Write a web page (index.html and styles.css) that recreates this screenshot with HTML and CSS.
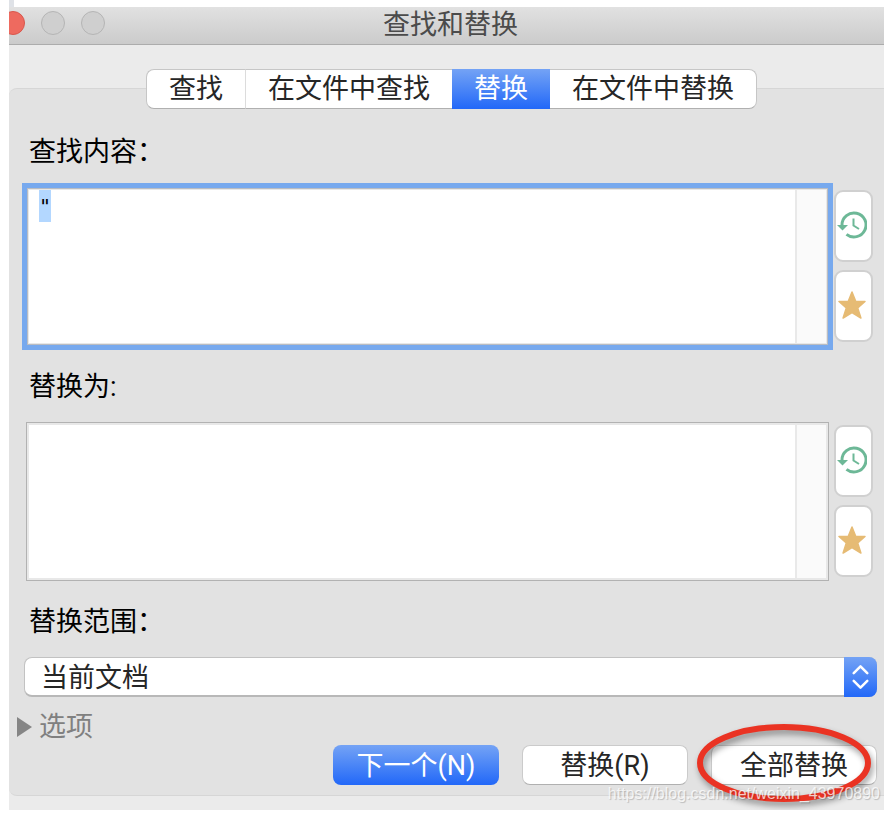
FILE: index.html
```html
<!DOCTYPE html>
<html lang="zh-CN">
<head>
<meta charset="utf-8">
<title>查找和替换</title>
<link rel="stylesheet" href="styles.css">
</head>
<body>
<svg class="symbols" aria-hidden="true">
  <symbol id="history" viewBox="0 0 30 28">
    <path d="M5 14a12 12 0 1 1 4.500 9.300" fill="none" stroke="#6db897" stroke-width="3"/>
    <path d="M0 14h11l-5.500 5.500z" fill="#6db897"/>
    <path d="M16.500 7.500v7l5.500 3.500" fill="none" stroke="#6db897" stroke-width="2"/>
  </symbol>
  <symbol id="star" viewBox="0 0 28 28">
    <path d="M14 1l3.800 9.500H27l-7.300 6.500 3.200 10L14 21.500 5.100 27 8.300 17 1 10.500h9.200z" fill="#e6bb74" stroke="#e6bb74" stroke-width="1.500" stroke-linejoin="round"/>
  </symbol>
</svg>
<main class="window">
  <header class="titlebar">
    <div class="lights"><span class="light close"></span><span class="light"></span><span class="light"></span></div>
    <h1>查找和替换</h1>
  </header>
  <nav class="tabs">
    <button type="button">查找</button>
    <button type="button">在文件中查找</button>
    <button type="button" class="active">替换</button>
    <button type="button">在文件中替换</button>
  </nav>
  <form class="panel">
    <label for="find">查找内容：</label>
    <div class="field">
      <div class="editor"><textarea id="find" autofocus spellcheck="false">"</textarea><span class="gutter"></span></div>
      <div class="tools">
        <button type="button" aria-label="历史"><svg class="icon-history"><use href="#history"/></svg></button>
        <button type="button" aria-label="收藏"><svg class="icon-star"><use href="#star"/></svg></button>
      </div>
    </div>
    <label for="replace">替换为:</label>
    <div class="field">
      <div class="editor"><textarea id="replace" spellcheck="false"></textarea><span class="gutter"></span></div>
      <div class="tools">
        <button type="button" aria-label="历史"><svg class="icon-history"><use href="#history"/></svg></button>
        <button type="button" aria-label="收藏"><svg class="icon-star"><use href="#star"/></svg></button>
      </div>
    </div>
    <label for="scope">替换范围：</label>
    <div class="popup">
      <select id="scope"><option>当前文档</option></select>
      <span class="stepper"><svg viewBox="0 0 34 40"><path d="M10 16l7-7 7 7M10 24l7 7 7-7" fill="none" stroke="#fff" stroke-width="2.600" stroke-linecap="round" stroke-linejoin="round"/></svg></span>
    </div>
    <button type="button" class="options"><svg viewBox="0 0 15 20"><path d="M0 0v20l15-10z" fill="#858585"/></svg>选项</button>
    <div class="actions">
      <button type="button" class="primary">下一个(N)</button>
      <button type="button">替换(R)</button>
      <div class="marked">
        <button type="button">全部替换</button>
        <svg class="ring" viewBox="0 0 190 94"><ellipse cx="90" cy="42" rx="84" ry="36" fill="none" stroke="#ea3323" stroke-width="6"/></svg>
      </div>
    </div>
  </form>
  <span class="watermark">https://blog.csdn.net/weixin_43970890</span>
</main>
<script src="main.js"></script>
</body>
</html>
```
FILE: styles.css
```css
* { box-sizing: border-box; }
body {
  margin: 0;
  padding: 7px 5px 3px 9px;
  background: linear-gradient(#dfe2e7, #dfe2e7) 9px 0 / 5px 7px no-repeat #fff;
  font: 27px/32px Roboto, "Noto Sans CJK SC", sans-serif;
  color: #000;
}
button, select { font: inherit; color: #262626; margin: 0; padding: 0; border: 0; outline: 0; background: none; white-space: nowrap; }
.symbols { display: none; }
.window { position: relative; background: #ebebeb; overflow: hidden; padding-bottom: 14px; }
.titlebar {
  position: relative;
  height: 38px;
  padding-left: 8px;
  border-bottom: 1px solid #acacac;
  background: linear-gradient(#e1e1e1, #cbcbcb);
}
.titlebar h1 { margin: 0; font: inherit; line-height: 36px; text-align: center; color: #4b4b4b; }
.lights { position: absolute; left: -8px; top: 4px; display: flex; gap: 16px; }
.light { width: 24px; height: 24px; border: 1px solid #b5b5b5; border-radius: 50%; background: #cfcfcf; }
.light.close { background: #ee6a5f; border-color: #d9574d; }
.tabs { position: relative; z-index: 1; display: flex; justify-content: center; margin: 24px 0 -21px; padding-left: 10px; }
.tabs button {
  height: 40px;
  padding: 0 22px;
  border: solid #c6c6c6;
  border-width: 1px 0;
  border-bottom-color: #b0b0b0;
  background: #fff;
}
.tabs button:first-child { border-left-width: 1px; border-radius: 8px 0 0 8px; }
.tabs button:last-child { border-right-width: 1px; border-radius: 0 8px 8px 0; }
.tabs button + button:not(.active):not(:last-child) { border-left: 1px solid #dcdcdc; }
.tabs .active { border-color: transparent; }
.tabs .active, .primary, .stepper { background: linear-gradient(#74a3f5, #2268f8) border-box; color: #fff; }
.panel {
  display: flex;
  flex-direction: column;
  padding: 47px 7px 10px 17px;
  border: 1px solid #d6d6d6;
  border-width: 1px 0;
  border-radius: 8px 0 0 8px;
  background: #e2e2e2;
}
.panel label { margin-left: 3px; }
.field { display: flex; gap: 5px; margin: 19px 4px 25px 0; }
.editor {
  display: flex;
  flex: 1;
  height: 159px;
  border: 1px solid #b2b2b2;
  background: #fff;
  box-shadow: inset 0 0 0 2px #e8e8e8;
  padding: 2px;
}
.editor:focus-within { border-color: #77a9ee; box-shadow: 0 0 0 4px #77a9ee, inset 0 0 0 1px #b9bcc2, inset 0 0 0 2px #e8e8e8; }
.editor textarea {
  flex: 1;
  min-width: 0;
  padding: 0 10px;
  border: 0;
  outline: 0;
  resize: none;
  background: none;
  color: #000;
  caret-color: transparent;
  font: 20px/32px "DejaVu Sans Mono", monospace;
}
.editor textarea::selection { background: #b3d7ff; color: #000; }
.gutter { width: 31px; border-left: 2px solid #e9e9e9; background: #fafafa; }
.tools { display: flex; flex-direction: column; gap: 8px; padding-top: 3px; }
.tools button {
  display: flex;
  align-items: center;
  justify-content: center;
  width: 39px;
  height: 72px;
  padding: 0 3px 3px 0;
  border: 2px solid #d0d0d0;
  border-radius: 9px;
  background: #fff;
}
.icon-history { width: 30px; height: 28px; flex: none; }
.icon-star { width: 28px; height: 28px; flex: none; }
.popup { position: relative; margin: 19px 0 14px -2px; height: 40px; }
.popup select {
  appearance: none;
  width: 100%;
  height: 40px;
  padding: 3px 40px 0 16px;
  border: 1px solid #c2c2c2;
  border-bottom: 2px solid #b8b8b8;
  border-radius: 8px;
  background: #fff;
}
.stepper { position: absolute; right: 0; top: 0; width: 33px; height: 40px; border-radius: 0 8px 8px 0; pointer-events: none; }
.stepper svg { display: block; width: 100%; height: 100%; }
.options { display: flex; align-items: center; align-self: flex-start; gap: 7px; margin: 0 0 2px -9px; color: #808080; }
.options svg { width: 15px; height: 20px; }
.actions { display: flex; justify-content: flex-end; gap: 23px; }
.actions button {
  width: 166px;
  height: 40px;
  padding-top: 2px;
  border: 1px solid #cbcbcb;
  border-bottom-color: #b0b0b0;
  border-radius: 8px;
  background: #fff;
}
.actions .primary { background: linear-gradient(#74a3f5, #2268f8) border-box; border-color: transparent; color: #fff; }
.marked { position: relative; }
.ring { position: absolute; left: -17px; top: -24px; width: 190px; height: 94px; pointer-events: none; filter: drop-shadow(2px 4px 3px rgba(0, 0, 0, 0.4)); }
.watermark {
  position: absolute;
  right: 4px;
  bottom: 6px;
  font: 16px/20px "Liberation Sans", sans-serif;
  color: rgba(255, 255, 255, 0.75);
  text-shadow: 1px 1px 1px rgba(0, 0, 0, 0.2);
}
```
FILE: main.js
```js
const find = document.getElementById("find");
find.focus();
find.select();
```
